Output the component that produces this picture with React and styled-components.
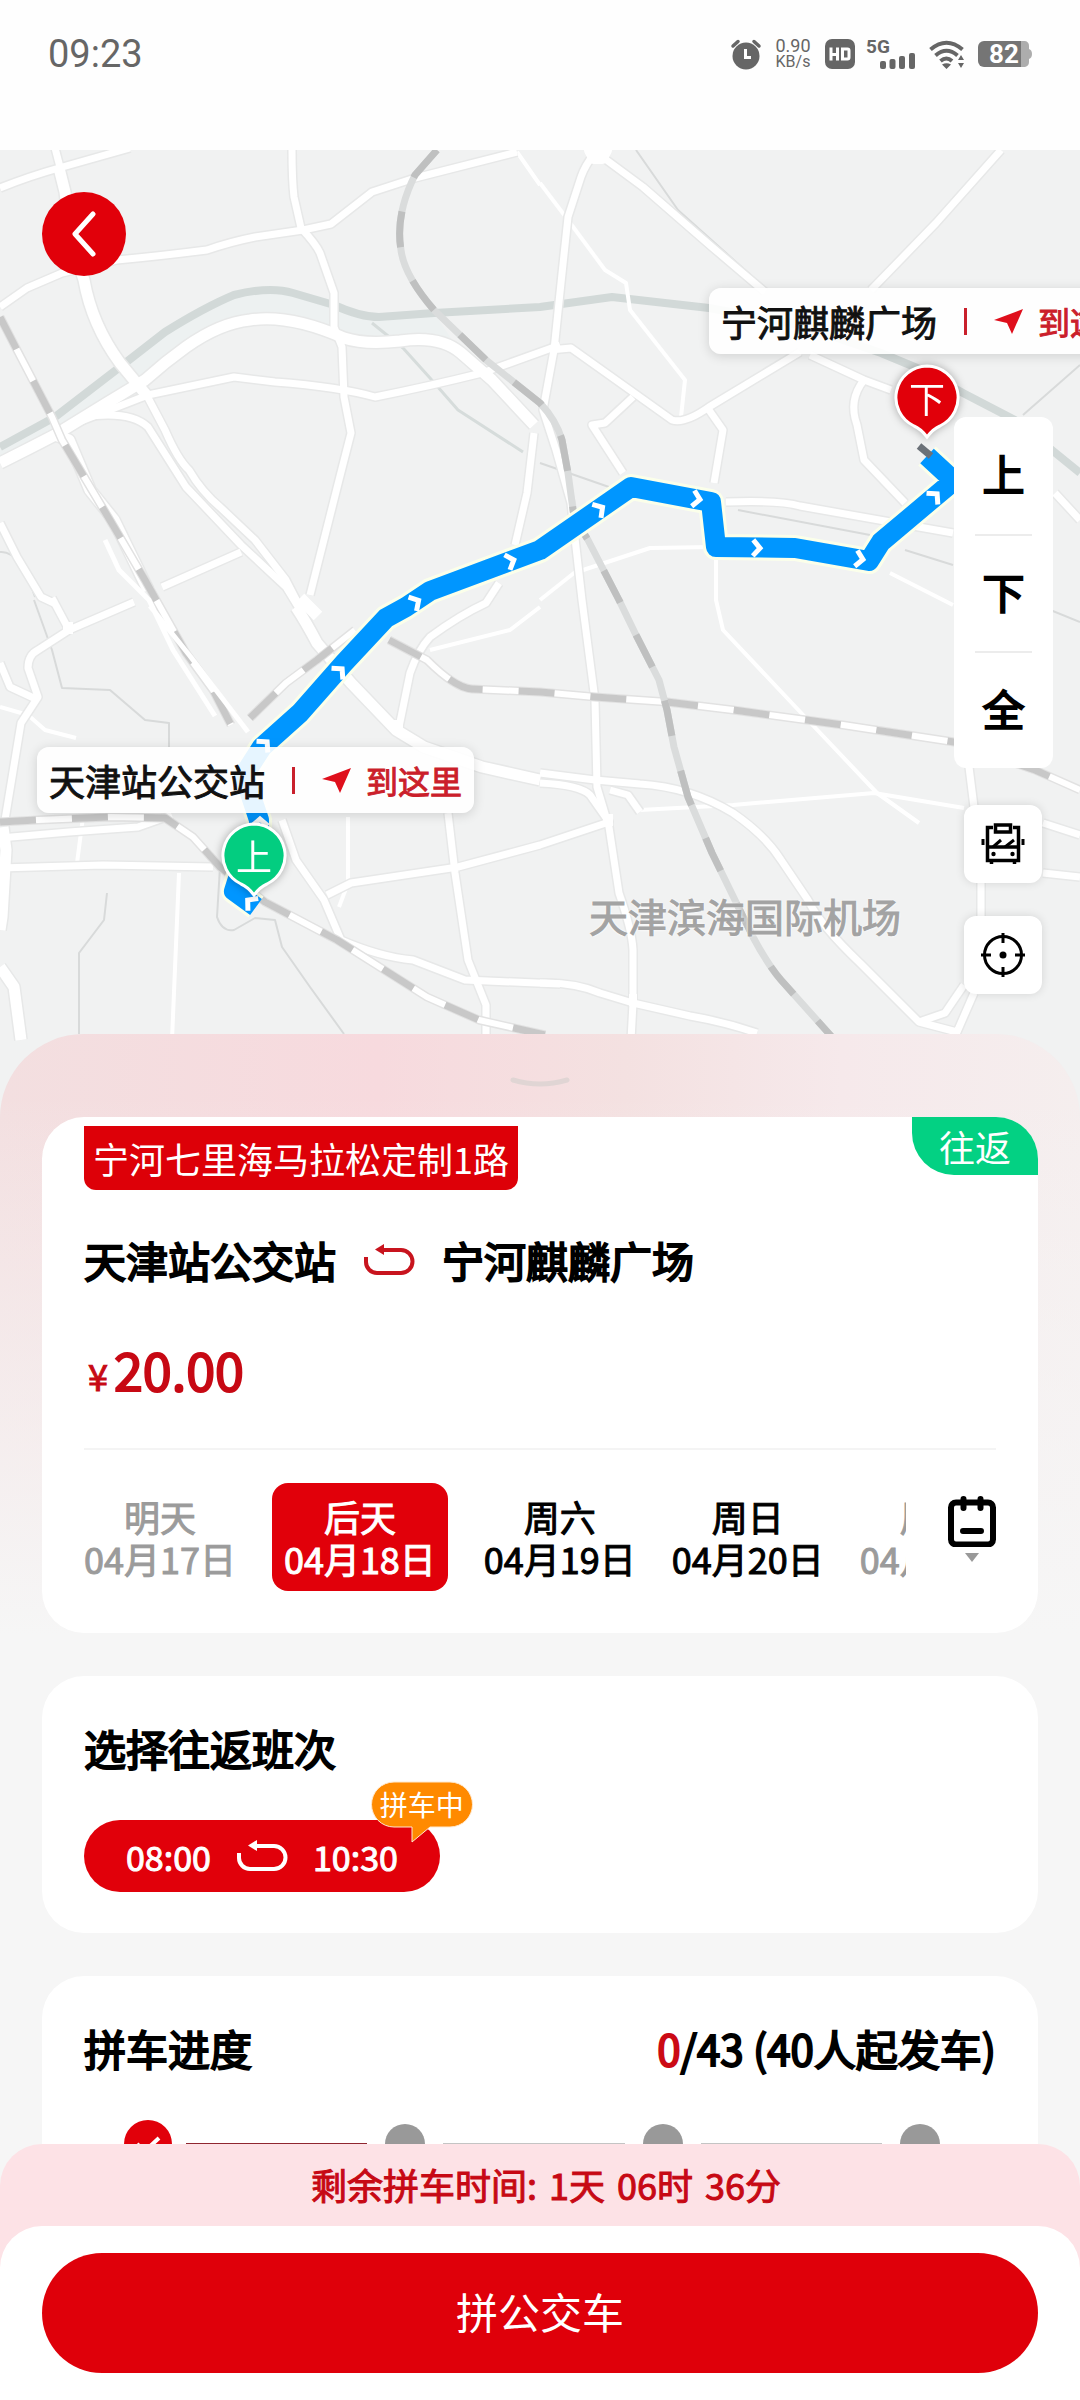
import React, { useState } from "react";
import styled, { createGlobalStyle, css } from "styled-components";

const GlobalStyle = createGlobalStyle`
  * {
    box-sizing: border-box;
  }
  body {
    margin: 0;
    background: #fefefe;
    color: #000;
    font-family: "Noto Sans CJK SC", "Noto Sans", sans-serif;
  }
  button {
    border: 0;
    padding: 0;
    background: none;
    color: inherit;
    font: inherit;
    cursor: pointer;
  }
  h2, p {
    margin: 0;
  }
  svg {
    display: block;
    flex: none;
  }
`;

// regular glyph widths with a heavier outline
const semiBold = css`
  font-weight: 400;
  -webkit-text-stroke: 1px currentColor;
`;

const heading = css`
  font-size: 42px;
  font-weight: 400;
  line-height: 60px;
  -webkit-text-stroke: 2px currentColor;
`;

const Screen = styled.div`
  display: flex;
  flex-direction: column;
  height: 100vh;
  overflow: hidden;
`;

/* ---------- status bar ---------- */

const StatusBar = styled.header`
  display: flex;
  align-items: center;
  justify-content: space-between;
  flex: none;
  height: 150px;
  padding: 0 48px 42px;
  color: #666;
  font-family: Roboto, sans-serif;
`;

const Clock = styled.time`
  font-size: 38px;
  line-height: 42px;
`;

const StatusIcons = styled.div`
  display: flex;
  align-items: center;
  gap: 13px;

  svg {
    overflow: visible;
  }
`;

const NetSpeed = styled.div`
  width: 38px;
  font-size: 18px;
  line-height: 16px;
  text-align: center;
`;

const NetUnit = styled.div`
  font-size: 16px;
`;

/* ---------- map ---------- */

const MapArea = styled.section`
  position: relative;
  flex: none;
  height: 968px;
  overflow: hidden;
  background: #f1f2f2;
`;

const MapDrawing = styled.svg`
  width: 100%;
  height: 100%;
`;

const BackButton = styled.button`
  position: absolute;
  top: 42px;
  left: 42px;
  display: grid;
  place-items: center;
  width: 84px;
  height: 84px;
  border-radius: 50%;
  background: #e1000a;
`;

const StopLabel = styled.div`
  position: absolute;
  top: ${(p) => p.$top}px;
  left: ${(p) => p.$left}px;
  display: flex;
  align-items: center;
  height: 66px;
  padding: 0 12px;
  border-radius: 12px;
  background: rgba(255, 255, 255, 0.9);
  box-shadow: 0 2px 12px rgba(0, 0, 0, 0.14);
  color: #111;
  font-size: 36px;
  white-space: nowrap;
  ${semiBold}
`;

const LabelRule = styled.span`
  width: 3px;
  height: 27px;
  margin: 0 27px;
  background: #c9202c;
`;

const GoHere = styled.a`
  display: flex;
  align-items: center;
  gap: 14px;
  color: #cb1f2b;
  font-size: 32px;
  text-decoration: none;
`;

const Pin = styled.div`
  position: absolute;
  top: ${(p) => p.$top}px;
  left: ${(p) => p.$left}px;
  display: grid;
  width: 68px;
  height: 76px;
  filter: drop-shadow(0 0 4px rgba(0, 0, 0, 0.3));

  > * {
    grid-area: 1 / 1;
  }
`;

const PinText = styled.span`
  color: #fff;
  font-size: 36px;
  line-height: 66px;
  text-align: center;
`;

const PlaceName = styled.span`
  position: absolute;
  top: 735px;
  left: 589px;
  color: #a3a3a3;
  font-size: 39px;
  line-height: 60px;
  text-shadow: 0 0 3px #fff, 0 0 3px #fff;
  ${semiBold}
`;

const MapTools = styled.div`
  position: absolute;
  top: 267px;
  right: 27px;
  display: flex;
  flex-direction: column;
  align-items: flex-end;
`;

const StopSwitch = styled.div`
  display: flex;
  flex-direction: column;
  width: 99px;
  padding: 0 21px;
  border-radius: 12px;
  background: #fff;
`;

const StopSwitchButton = styled.button`
  height: 117px;
  padding-bottom: 6px;
  ${heading}

  & + & {
    border-top: 2px solid #ececec;
  }
`;

const ToolButton = styled.button`
  display: grid;
  place-items: center;
  width: 78px;
  height: 78px;
  margin: ${(p) => p.$gap}px 11px 0 0;
  border-radius: 12px;
  background: #fff;
  box-shadow: 0 0 10px rgba(0, 0, 0, 0.12);
`;

/* ---------- sheet ---------- */

const Sheet = styled.main`
  position: relative;
  flex: 1;
  min-height: 0;
  margin-top: -84px;
  padding: 0 42px;
  overflow: hidden;
  border-radius: 84px 84px 0 0;
  background:
    linear-gradient(180deg, rgba(246, 246, 246, 0) 60px, #f6f6f6 600px),
    linear-gradient(90deg, #f3dfe0 0%, #f7dade 35%, #f4e1e1 58%, #f6e9eb 78%, #f5eeee 100%);
`;

const Handle = styled.button`
  display: grid;
  place-items: center;
  width: 100%;
  height: 83px;
  padding-top: 14px;
`;

const Card = styled.section`
  position: relative;
  margin-bottom: 43px;
  padding: 0 42px;
  border-radius: 42px;
  background: #fff;
`;

const RouteCard = styled(Card)`
  padding-top: 9px;
  padding-bottom: 42px;
`;

const RouteName = styled.p`
  width: max-content;
  height: 64px;
  padding: 0 9px;
  border-radius: 0 0 12px 12px;
  background: #dd0008;
  color: #fff;
  font-size: 36px;
  line-height: 64px;
`;

const RoundTripTag = styled.span`
  position: absolute;
  top: 0;
  right: 0;
  width: 126px;
  height: 58px;
  border-radius: 0 42px 0 42px;
  background: #03d183;
  color: #fff;
  font-size: 36px;
  line-height: 58px;
  text-align: center;
`;

const Stops = styled.h2`
  display: flex;
  align-items: center;
  gap: 27px;
  margin-top: 40px;
  ${heading}
`;

const Price = styled.p`
  display: flex;
  align-items: baseline;
  gap: 6px;
  height: 120px;
  margin-top: 40px;
  border-bottom: 2px solid #f4f4f4;
  color: #c70914;
  font-size: 52px;
  line-height: 78px;
  -webkit-text-stroke: 2px currentColor;
`;

const Currency = styled.span`
  padding-left: 4px;
  font-size: 36px;
  ${semiBold}
`;

const DateBar = styled.div`
  display: flex;
  gap: 42px;
  margin-top: 33px;
`;

const DateList = styled.div`
  display: flex;
  flex: 1;
  gap: 36px;
  min-width: 0;
  overflow: hidden;
`;

const DateButton = styled.button`
  flex: none;
  height: 108px;
  padding: 0 ${(p) => (p.$active ? 12 : 0)}px;
  border-radius: 16px;
  background: ${(p) => (p.$active ? "#e1000a" : "transparent")};
  color: ${(p) => (p.$active ? "#fff" : p.$muted ? "#9b9b9b" : "#000")};
  font-size: 36px;
  line-height: 42px;
  ${semiBold}
`;

const DateLine = styled.span`
  display: block;
`;

const CalendarButton = styled.button`
  display: flex;
  flex-direction: column;
  align-items: center;
  gap: 6px;
  flex: none;
  width: 48px;
  padding-top: 12px;
`;

const CardTitle = styled.h2`
  ${heading}
`;

const TripCard = styled(Card)`
  padding-top: 42px;
  padding-bottom: 41px;
`;

const TripButton = styled.button`
  position: relative;
  display: flex;
  align-items: center;
  gap: 25px;
  height: 72px;
  margin-top: 42px;
  padding: 0 42px;
  border-radius: 36px;
  background: #e1000a;
  color: #fff;
  font-size: 34px;
  ${semiBold}
`;

const TripBadge = styled.span`
  position: absolute;
  top: -39px;
  right: -34px;
  display: grid;
  width: 104px;
  height: 62px;

  > * {
    grid-area: 1 / 1;
  }
`;

const TripBadgeText = styled.span`
  color: #fff;
  font-size: 28px;
  line-height: 46px;
  text-align: center;
  -webkit-text-stroke: 0;
`;

const ProgressCard = styled(Card)`
  padding-top: 42px;
  padding-bottom: 60px;
`;

const ProgressHead = styled.div`
  display: flex;
  justify-content: space-between;
`;

const Count = styled.p`
  ${heading}
`;

const CountNow = styled.span`
  color: #cb0a14;
`;

const Steps = styled.div`
  display: flex;
  align-items: center;
  margin-top: 42px;
  padding: 0 52px 0 40px;
`;

const StepSlot = styled.div`
  display: grid;
  place-items: center;
  flex: none;
  width: 48px;
  height: 48px;
`;

const StepDot = styled.div`
  display: grid;
  place-items: center;
  width: ${(p) => (p.$done ? 48 : 40)}px;
  height: ${(p) => (p.$done ? 48 : 40)}px;
  border-radius: 50%;
  background: ${(p) => (p.$done ? "#e1000a" : "#999")};
`;

const StepLine = styled.div`
  flex: 1;
  height: 2px;
  margin: 0 14px;
  background: ${(p) => (p.$done ? "#8f2630" : "#c4c4c4")};
`;

/* ---------- footer ---------- */

const Footer = styled.footer`
  position: relative;
  flex: none;
  margin-top: -42px;
  border-radius: 42px 42px 0 0;
  background: #fde2e6;
`;

const TimeLeft = styled.p`
  display: flex;
  justify-content: center;
  gap: 12px;
  padding: 0 0 2px 12px;
  color: #c70914;
  font-size: 36px;
  line-height: 80px;
  ${semiBold}
`;

const Actions = styled.div`
  padding: 27px 42px;
  border-radius: 42px 42px 0 0;
  background: #fff;
`;

const SubmitButton = styled.button`
  width: 100%;
  height: 120px;
  padding-bottom: 6px;
  border-radius: 60px;
  background: #df000a;
  color: #fff;
  font-size: 42px;
`;

/* ---------- icons ---------- */

const AlarmIcon = () => (
  <svg width="30" height="30" viewBox="0 0 30 30" fill="none">
    <circle cx="15" cy="17" r="13.500" fill="#666" />
    <path d="M2 7l5-4.500M28 7l-5-4.500" stroke="#666" strokeWidth="3.500" strokeLinecap="round" />
    <path d="M14.500 10v8.500H20" stroke="#fff" strokeWidth="3" />
  </svg>
);

const HdIcon = () => (
  <svg width="30" height="30" viewBox="0 0 30 30" fill="none" stroke="#fff" strokeWidth="3">
    <rect width="30" height="30" rx="7" fill="#666" stroke="none" />
    <path d="M6 8.500v13M12.500 8.500v13M6 15.500h6.500M17.500 10v10M16 10h6.500a1.500 1.500 0 0 1 1.500 1.500v7a1.500 1.500 0 0 1-1.500 1.500H16" />
  </svg>
);

const SignalIcon = () => (
  <svg width="48" height="30" viewBox="0 0 48 30" fill="#666">
    <text x="-2" y="14" fontFamily="Roboto, sans-serif" fontSize="19" fontWeight="700">5G</text>
    <rect x="12" y="22" width="6" height="8" rx="2" />
    <rect x="21.500" y="20" width="6" height="10" rx="2" />
    <rect x="31" y="17" width="6" height="13" rx="2" />
    <rect x="41" y="14" width="6" height="16" rx="2" />
  </svg>
);

const WifiIcon = () => (
  <svg width="36" height="30" viewBox="0 0 36 30" fill="none" stroke="#666" strokeWidth="4">
    <path d="M1.500 10.500Q17.500-3 33.500 10.500" />
    <path d="M6.500 16.500Q17.500 7 28.500 16.500" />
    <path d="M11.500 22Q17.500 17 23 22" />
    <path d="M13 25.500q4.500-2.500 9 0L17.500 30zM29 21l3-5 3 5zM29 24l3 5 3-5z" fill="#666" stroke="none" />
  </svg>
);

const BatteryIcon = () => (
  <svg width="54" height="28" viewBox="0 0 54 28">
    <path d="M42 1h5a5 5 0 0 1 4 5v3q3 1 3 5t-3 5v3a5 5 0 0 1-4 5h-5z" fill="#adadad" />
    <path d="M6 1h37v26H6a6 6 0 0 1-6-6V7a6 6 0 0 1 6-6z" fill="#757575" />
    <text x="11" y="23" fill="#fff" fontFamily="Roboto, sans-serif" fontSize="26" fontWeight="700">82</text>
  </svg>
);

const BackIcon = () => (
  <svg width="24" height="46" viewBox="0 0 24 46" fill="none" stroke="#fff" strokeWidth="5" strokeLinecap="round" strokeLinejoin="round">
    <path d="M21 3L3 23l18 20" />
  </svg>
);

const SendIcon = () => (
  <svg width="30" height="27" viewBox="0 0 30 27">
    <path d="M29 1L0 12l13 3 5 11z" fill="#df0f1c" />
  </svg>
);

const LoopIcon = ({ color }) => (
  <svg width="52" height="34" viewBox="0 0 52 34" fill="none">
    <path d="M17 7h21a11.500 11.500 0 0 1 0 23H14A11 11 0 0 1 3 19v-5" stroke={color} strokeWidth="4" />
    <path d="M12 6.500L21 1v11z" fill={color} />
  </svg>
);

const BusIcon = () => (
  <svg width="44" height="42" viewBox="0 0 44 42" fill="none" stroke="#000" strokeWidth="3.500">
    <path d="M12 4.500H6.500v33h31v-33H32M6.500 24h31M10.500 37v4M33.500 37v4" />
    <rect x="14.500" y="2" width="15" height="7" />
    <path d="M12 24l8-7M24 24l9-7" strokeWidth="3" />
    <path d="M2 16v6M42 16v6" strokeWidth="3" />
    <circle cx="12.500" cy="31" r="2.200" fill="#000" stroke="none" />
    <circle cx="31.500" cy="31" r="2.200" fill="#000" stroke="none" />
  </svg>
);

const TargetIcon = () => (
  <svg width="44" height="44" viewBox="0 0 44 44" fill="none" stroke="#000" strokeWidth="3">
    <circle cx="22" cy="22" r="18.500" />
    <path d="M22 0v10M22 34v10M0 22h10M34 22h10" />
    <circle cx="22" cy="22" r="3.500" fill="#000" stroke="none" />
  </svg>
);

const CalendarIcon = () => (
  <svg width="48" height="52" viewBox="0 0 48 52" fill="none" stroke="#000" strokeWidth="5" strokeLinecap="round">
    <rect x="3" y="7.500" width="42" height="42" rx="5" strokeWidth="6" />
    <path d="M15.500 4v9M32.500 4v9M15 36h18" strokeWidth="6" />
  </svg>
);

const CaretIcon = () => (
  <svg width="14" height="9" viewBox="0 0 14 9">
    <path d="M0 0h14L7 9z" fill="#999" />
  </svg>
);

const HandleIcon = () => (
  <svg width="60" height="12" viewBox="0 0 60 12" fill="none">
    <path d="M3 3q27 8 54 0" stroke="#e0d5d4" strokeWidth="5" strokeLinecap="round" />
  </svg>
);

const CheckIcon = () => (
  <svg width="26" height="18" viewBox="0 0 26 18" fill="none">
    <path d="M2 9l8 7L24 3" stroke="#fff" strokeWidth="4" />
  </svg>
);

const PinShape = ({ color }) => (
  <svg width="68" height="76" viewBox="0 0 68 76">
    <path
      d="M34 2a31.500 31.500 0 0 1 13 60q-7 3-13 11-6-8-13-11A31.500 31.500 0 0 1 34 2z"
      fill={color}
      stroke="#fff"
      strokeWidth="3"
    />
  </svg>
);

const BubbleShape = () => (
  <svg width="104" height="62" viewBox="0 0 104 62">
    <path
      d="M24 1h56a22 22 0 0 1 0 45H60L42 61V46H24A22 22 0 0 1 24 1z"
      fill="#ff8a00"
      stroke="#ffe9cf"
      strokeWidth="1"
    />
  </svg>
);

/* ---------- map drawing ---------- */

const wideRoads = [
  "M59 168L65 192Q70 240 84 280Q92 325 120 363L148 397",
  "M0 463Q30 448 55 435L107 403L145 380Q165 362 186 347Q220 323 250 320Q290 314 344 338Q365 345 400 341Q440 335 461 353L492 380L534 425",
  "M296 607Q306 622 317 643L351 683L396 730L424 747L482 767L540 780",
  "M55 435L69 440L90 490L114 520L148 590",
  "M0 967L14 987L21 1040",
  "M3 827L6 850L2 917L0 930",
];

const roads = [
  "M0 188Q30 176 59 168L130 148",
  "M55 148L60 167",
  "M145 392L165 430Q178 460 189 470Q202 492 220 507L255 540L286 580L300 607",
  "M0 307L27 288L62 273L117 260Q160 256 207 250Q230 242 255 237L303 230L331 224L372 192L415 178L517 152",
  "M292 148Q292 180 294 197L301 228Q316 244 320 253L334 293L334 327L342 347L344 397L351 433L339 480L310 595",
  "M534 433L527 493L515 545",
  "M62 430L76 423L148 395L234 377L275 382Q340 387 375 397Q430 386 482 373L560 345",
  "M83 417Q130 410 148 427L186 487L241 545L286 587L300 610",
  "M162 587L241 552",
  "M597 150Q585 165 581 177L568 217L561 283L554 350L543 410L556 450L571 503L582 600L595 700L597 787L609 827L619 893Q632 930 633 950L633 1003L631 1040",
  "M597 153L643 187L712 247L765 292",
  "M1001 150L936 223L871 290M800 352L709 407Q685 424 672 420L630 390L571 348L550 350",
  "M709 410L723 430L714 483",
  "M633 397L605 423L592 425L623 473",
  "M810 355L864 380L891 390M864 380Q848 400 857 425L864 460L905 503",
  "M726 502Q780 500 800 506L953 533",
  "M540 773L595 780L640 784Q690 787 733 813Q765 835 781 860L808 900Q820 925 860 963L919 1022L957 1032L974 993",
  "M919 1022L945 1013L964 985",
  "M540 783Q580 785 590 795L609 822L540 845L458 867L351 883L327 895",
  "M540 983Q575 982 600 993L633 1003L690 1016Q725 1022 757 1033",
  "M969 767L974 807L981 880L981 917",
  "M52 598L69 630L134 602M69 630L38 650Q28 655 28 668L38 697L21 723L5 820",
  "M0 523L17 557L41 597L56 604",
  "M0 663L10 687L38 700",
  "M0 838L69 832L138 827L172 815",
  "M0 868L103 865L213 867",
  "M399 727L410 673Q418 650 430 637Q460 615 486 603L499 583",
  "M282 820L296 860L324 900L341 940Q380 957 413 960L465 980L560 984",
  "M448 813L455 873L468 960L486 1005L486 1040",
  "M610 790L628 795L640 812",
  "M1055 493L1080 520M1043 823L1080 835M1043 873L1080 877",
];

const thinRoads = [
  "M540 183L568 220L605 270L626 283L630 310L685 380L681 417",
  "M716 557L716 600L723 630L805 717L877 793L919 823",
  "M540 600L574 573L650 548L712 547",
  "M640 810L733 805L874 793L964 808",
  "M0 707L28 715L45 730L76 738",
  "M83 817L77 863M179 873L172 1040",
  "M430 650L510 630L540 607",
  "M348 817L348 883L339 907",
  "M517 152L540 185M890 573L953 605",
];

const greyLines = [
  "M34 600L52 650L62 688L110 690L145 720L169 723L169 747",
  "M220 867L217 917Q222 932 234 930L255 918L275 920L282 947L310 987L344 1034",
  "M107 893L104 920L79 953V1034",
  "M636 150L678 210L764 287",
  "M540 463L609 487M1023 415L1080 365M1043 607L1080 622",
  "M738 510L870 535M905 550L953 565",
  "M0 552Q20 550 35 597",
];

const railA = "M0 317L17 350L52 417L62 440L86 480L114 527L145 580L186 653L213 690L231 725";
const railB = "M437 150L415 175Q395 215 401 250Q404 275 434 310L486 360L540 403Q556 420 562 440L568 473L574 517L588 540L619 600L635 633L659 680L667 710L674 747L688 797L712 853L753 937Q768 965 781 980L832 1037";
const railC = "M389 640L427 660Q455 688 472 689L540 692L595 697L667 702L733 710L843 725L954 742L1035 770L1080 790";
const railD = "M0 822L38 820L110 817L165 818L193 837L220 867L265 902L337 940L427 997L479 1020L545 1035";
const railE = "M250 718L286 683L317 660L355 630";

const route = "M256 907L234 891L240 872L259 845V820L244 775L262 747L300 713L344 663L386 618L406 607L430 591L540 550L631 487L711 502L716 547L795 548L869 561L881 542L950 484L953 480L927 456";

const arrows = [
  [250, 902, -140], [260, 822, -90], [265, 744, -45], [340, 671, -45], [416, 602, -30], [511, 561, -20],
  [600, 509, -33], [697, 499, 10], [757, 548, 2], [860, 559, 10], [935, 496, -45],
];

function RouteMap() {
  return (
    <MapDrawing viewBox="0 150 1080 968" preserveAspectRatio="xMidYMin slice" fill="none" strokeLinejoin="round" aria-hidden="true">
      <path d="M0 447L55 417L120 367L165 332L234 295Q270 286 293 293L379 317L434 313L461 353L400 341L344 338L250 320L186 347L107 403L0 463z" fill="#edf1f1" />
      <path d="M0 447L55 417L120 367L165 332Q205 307 234 295Q270 286 293 293L334 305Q360 317 379 317L434 313L540 307L612 297L709 308L800 325L881 353L922 370L963 393L1015 420L1080 473" stroke="#d2d9d8" strokeWidth="8" />
      <path d="M372 323L403 348L430 378L458 410L523 452" stroke="#d6dcdb" strokeWidth="3" />
      {greyLines.map((d) => (
        <path key={d} d={d} stroke="#d8dada" strokeWidth="2" />
      ))}
      {thinRoads.map((d) => (
        <path key={d} d={d} stroke="#fff" strokeWidth="4" />
      ))}
      {roads.map((d) => (
        <path key={d} d={d} stroke="#e7e8e8" strokeWidth="10" />
      ))}
      {wideRoads.map((d) => (
        <path key={d} d={d} stroke="#e7e8e8" strokeWidth="14" />
      ))}
      {roads.map((d) => (
        <path key={d} d={d} stroke="#fff" strokeWidth="7" />
      ))}
      {wideRoads.map((d) => (
        <path key={d} d={d} stroke="#fff" strokeWidth="11" />
      ))}
      <path d="M590 150h16l-4 8h-8zM300 598l18 18M63 628h10M605 820h8M629 1000h8M393 726h10" stroke="#fff" strokeWidth="12" />
      {[railA, railD, railC, railE].map((d) => (
        <g key={d}>
          <path d={d} stroke="#e2e2e2" strokeWidth="9" />
          <path d={d} stroke="#fff" strokeWidth="6" />
          <path d={d} stroke="#c8c8c8" strokeWidth="7" strokeDasharray="36 36" />
        </g>
      ))}
      <path d={railB} stroke="#dadcdc" strokeWidth="7" />
      <path d={railB} stroke="#bfc0c0" strokeWidth="7" strokeDasharray="36 36" />
      <path d="M105 540l14 30 30 30 24 50 42 66M150 606l40 50 58 76" stroke="#fff" strokeWidth="5" />
      <path d={route} stroke="#fbffea" strokeWidth="26" />
      <path d={route} stroke="#0096ff" strokeWidth="20" />
      <path d="M919 446l12 10" stroke="#6b7178" strokeWidth="7" />
      {arrows.map(([x, y, angle]) => (
        <path key={`${x}-${y}`} d="M-4-8L3 0l-7 8" stroke="#fff" strokeWidth="5" strokeLinejoin="miter" transform={`translate(${x} ${y}) rotate(${angle})`} />
      ))}
    </MapDrawing>
  );
}

/* ---------- data ---------- */

const dates = [
  { day: "明天", date: "04月17日", muted: true },
  { day: "后天", date: "04月18日" },
  { day: "周六", date: "04月19日" },
  { day: "周日", date: "04月20日" },
  { day: "周一", date: "04月21日", muted: true },
];

const timeLeft = ["剩余拼车时间:", "1天", "06时", "36分"];

const steps = [true, false, false, false];

const MapLabel = ({ top, left, name }) => (
  <StopLabel $top={top} $left={left}>
    {name}
    <LabelRule />
    <GoHere href="#navigate">
      <SendIcon />
      到这里
    </GoHere>
  </StopLabel>
);

const App = () => {
  const [selected, setSelected] = useState("04月18日");

  return (
    <Screen>
      <GlobalStyle />
      <StatusBar>
        <Clock>09:23</Clock>
        <StatusIcons>
          <AlarmIcon />
          <NetSpeed>
            0.90
            <NetUnit>KB/s</NetUnit>
          </NetSpeed>
          <HdIcon />
          <SignalIcon />
          <WifiIcon />
          <BatteryIcon />
        </StatusIcons>
      </StatusBar>

      <MapArea>
        <RouteMap />
        <PlaceName>天津滨海国际机场</PlaceName>
        <Pin $top={214} $left={893}>
          <PinShape color="#e1000a" />
          <PinText>下</PinText>
        </Pin>
        <Pin $top={672} $left={220}>
          <PinShape color="#03cd80" />
          <PinText>上</PinText>
        </Pin>
        <MapLabel top={138} left={709} name="宁河麒麟广场" />
        <MapLabel top={597} left={37} name="天津站公交站" />
        <BackButton aria-label="返回">
          <BackIcon />
        </BackButton>
        <MapTools>
          <StopSwitch>
            <StopSwitchButton>上</StopSwitchButton>
            <StopSwitchButton>下</StopSwitchButton>
            <StopSwitchButton>全</StopSwitchButton>
          </StopSwitch>
          <ToolButton $gap={37} aria-label="车辆">
            <BusIcon />
          </ToolButton>
          <ToolButton $gap={33} aria-label="定位">
            <TargetIcon />
          </ToolButton>
        </MapTools>
      </MapArea>

      <Sheet>
        <Handle aria-label="展开">
          <HandleIcon />
        </Handle>

        <RouteCard>
          <RouteName>宁河七里海马拉松定制1路</RouteName>
          <RoundTripTag>往返</RoundTripTag>
          <Stops>
            天津站公交站
            <LoopIcon color="#c8141e" />
            宁河麒麟广场
          </Stops>
          <Price>
            <Currency>¥</Currency>20.00
          </Price>
          <DateBar>
            <DateList>
              {dates.map((d) => (
                <DateButton
                  key={d.date}
                  $active={d.date === selected}
                  $muted={d.muted}
                  onClick={() => setSelected(d.date)}
                >
                  <DateLine>{d.day}</DateLine>
                  <DateLine>{d.date}</DateLine>
                </DateButton>
              ))}
            </DateList>
            <CalendarButton aria-label="选择日期">
              <CalendarIcon />
              <CaretIcon />
            </CalendarButton>
          </DateBar>
        </RouteCard>

        <TripCard>
          <CardTitle>选择往返班次</CardTitle>
          <TripButton>
            08:00
            <LoopIcon color="#fff" />
            10:30
            <TripBadge>
              <BubbleShape />
              <TripBadgeText>拼车中</TripBadgeText>
            </TripBadge>
          </TripButton>
        </TripCard>

        <ProgressCard>
          <ProgressHead>
            <CardTitle>拼车进度</CardTitle>
            <Count>
              <CountNow>0</CountNow>/43 (40人起发车)
            </Count>
          </ProgressHead>
          <Steps>
            {steps.map((done, i) => (
              <React.Fragment key={i}>
                {i > 0 && <StepLine $done={steps[i - 1]} />}
                <StepSlot>
                  <StepDot $done={done}>{done && <CheckIcon />}</StepDot>
                </StepSlot>
              </React.Fragment>
            ))}
          </Steps>
        </ProgressCard>
      </Sheet>

      <Footer>
        <TimeLeft>
          {timeLeft.map((part) => (
            <span key={part}>{part}</span>
          ))}
        </TimeLeft>
        <Actions>
          <SubmitButton>拼公交车</SubmitButton>
        </Actions>
      </Footer>
    </Screen>
  );
};

export default App;
